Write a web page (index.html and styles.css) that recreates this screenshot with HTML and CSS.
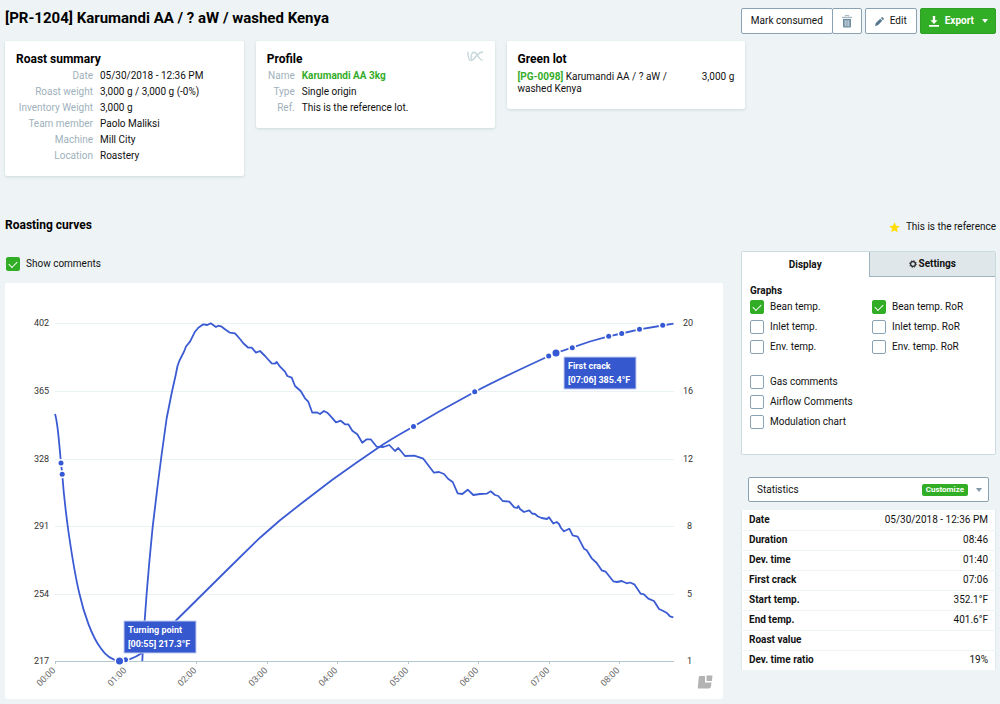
FILE: index.html
```html
<!DOCTYPE html>
<html lang="en">
<head>
<meta charset="utf-8">
<title>Karumandi AA – Roast</title>
<link rel="stylesheet" href="styles.css">
</head>
<body>
<header class="topbar">
  <h1>[PR-1204] Karumandi AA / ? aW / washed Kenya</h1>
  <div class="actions">
    <div class="btn-group">
      <button class="btn" type="button">Mark consumed</button>
      <button class="btn btn-icon" type="button" aria-label="Delete">
        <svg width="10" height="13" viewBox="0 0 10 13"><path d="M3.2 1.6V.5h3.6v1.1" fill="none" stroke="#a5b8c4"/><path d="M0 1.8h10v1.4H0z" fill="#a5b8c4"/><path d="M1 4h8v7.6a1 1 0 0 1-1 1H2a1 1 0 0 1-1-1z" fill="#6e8ca0"/><path d="M3.2 5.2v6.2M5 5.2v6.2M6.800 5.200v6.200" stroke="#dfe7ec" stroke-width=".9"/></svg>
      </button>
    </div>
    <button class="btn" type="button"><svg width="9" height="9" viewBox="0 0 10 10"><path d="M0 10l.9-3.200L5.800 1.900l2.300 2.300-4.900 4.900zM6.500 1.200L7.500.3q.4-.4.8 0l1.400 1.400q.4.4 0 .8l-.9 1z" fill="#56788f"/></svg>Edit</button>
    <button class="btn btn-primary" type="button"><svg width="10" height="11" viewBox="0 0 10 11"><path d="M3.800 0h2.400v4.300h2.300L5 8 1.500 4.300h2.300zM0 9h10v1.700H0z" fill="#fff"/></svg>Export<svg class="caret" width="6" height="4" viewBox="0 0 6 4"><path d="M0 0h6L3 4z" fill="#fff"/></svg></button>
  </div>
</header>

<section class="cards">
  <article class="card">
    <h2>Roast summary</h2>
    <dl class="facts facts-wide">
      <dt>Date</dt><dd>05/30/2018 - 12:36 PM</dd>
      <dt>Roast weight</dt><dd>3,000 g / 3,000 g (-0%)</dd>
      <dt>Inventory Weight</dt><dd>3,000 g</dd>
      <dt>Team member</dt><dd>Paolo Maliksi</dd>
      <dt>Machine</dt><dd>Mill City</dd>
      <dt>Location</dt><dd>Roastery</dd>
    </dl>
  </article>
  <article class="card">
    <div class="card-head">
      <h2>Profile</h2>
      <svg width="17" height="11" viewBox="0 0 17 11" fill="none" stroke="#c6d7dc" stroke-width="1.400"><path d="M.8.8C1 6 1.500 9.500 4 9.500 8 9.500 9.500 1 16 1"/><path d="M4.600 8.500C3.200 4 5 1.200 7.200 1.200c3.300 0 4 7.800 8.500 8.200"/></svg>
    </div>
    <dl class="facts">
      <dt>Name</dt><dd><a href="#profile">Karumandi AA 3kg</a></dd>
      <dt>Type</dt><dd>Single origin</dd>
      <dt>Ref.</dt><dd>This is the reference lot.</dd>
    </dl>
  </article>
  <article class="card">
    <h2>Green lot</h2>
    <div class="lot"><p><a href="#lot">[PG-0098]</a> Karumandi AA / ? aW / washed Kenya</p><span>3,000 g</span></div>
  </article>
</section>

<main class="curves">
  <section class="chart-col">
    <h2>Roasting curves</h2>
    <label class="check show-comments"><input type="checkbox" checked>Show comments</label>
    <div class="chart">
      <svg viewBox="5 283 718 416" role="img" aria-label="Bean temperature and rate of rise over time">
        <path class="grid" d="M55 323.500H674M55 391.500H674M55 459.500H674M55 526.500H674M55 594.500H674"/>
        <path class="axis" d="M55 661.500H674M55.500 661v3M126.500 661v3M196.500 661v3M267.500 661v3M337.500 661v3M408.500 661v3M478.500 661v3M549.500 661v3M619.500 661v3"/>
        <g class="ticks">
          <text x="34" y="326">402</text><text x="34" y="394">365</text><text x="34" y="462">328</text><text x="34" y="529">291</text><text x="34" y="597">254</text><text x="34" y="664">217</text>
          <text x="683" y="326">20</text><text x="683" y="394">16</text><text x="683" y="462">12</text><text x="687" y="529">8</text><text x="687" y="597">5</text><text x="687" y="664">1</text>
        </g>
        <g class="times">
          <text transform="translate(56 671) rotate(-45)">00:00</text>
          <text transform="translate(127 671) rotate(-45)">01:00</text>
          <text transform="translate(197 671) rotate(-45)">02:00</text>
          <text transform="translate(268 671) rotate(-45)">03:00</text>
          <text transform="translate(338 671) rotate(-45)">04:00</text>
          <text transform="translate(409 671) rotate(-45)">05:00</text>
          <text transform="translate(479 671) rotate(-45)">06:00</text>
          <text transform="translate(550 671) rotate(-45)">07:00</text>
          <text transform="translate(620 671) rotate(-45)">08:00</text>
        </g>
        <path class="line" d="M142.300 661L142.800 650L144.700 620L146.700 593L149.500 560L152.700 526.700L157.700 485L161.700 454L166.700 418L172 391.500L175.700 375L177.500 366L179.500 360.500L184 351.700L186 346.500L190 341.700L195 331.700L198.300 327.700L203.300 324.300L207.300 325L210.700 323.300L216 327L218.300 325.700L221.700 326.700L225 329.300L230 332.700L235 333.300L240 339L243.300 343.300L248.300 347.700L251.700 347.700L256 352.700L260 351L265 356L271.700 363.300L275 363.700L276.700 362L280 366.700L285 371.700L287.300 376L291.700 377.700L295 386L300.700 391L305 398.300L308.300 401.700L312.300 412.700L316.700 412.300L320 414L324 411L327.300 412.700L331.700 417.300L336 422.300L340.700 420.700L345 424.300L348.300 424.300L352.300 430.700L357.300 434.300L362.300 442.700L366.700 439.300L370.700 439.300L376.700 446.700L383.300 447L389.300 445L395 451L398.300 448L405 456L414.300 455.700L423.300 458.700L434 472.700L439 472L444 474L448.300 479L452.700 482L457.700 493.300L462.300 494L467.700 489.700L473.300 495L480 494L486.700 493.700L490.700 491.300L495 495L498.300 496L502.700 501L509.300 501.700L514.300 507.300L517 508L518.300 506L520 509L524 512L529.300 510.300L532 513.500L535 514L538 516.500L541.700 518L547 519L549 517.300L553.300 523.500L556.700 522L559 524L561 528L564 531.300L569.300 528.700L572.700 535.300L577.700 536.700L584 548.700L586.700 550.300L591.700 558.300L596.700 563L601.700 570.300L605.700 571.700L613.300 581.300L617 582L621.700 581L626.700 583.300L630 582.500L634.300 584.300L640.700 593.700L644 594.300L648.300 598.700L654 601L659 609L663.300 611L667.300 613.300L670 616.300L673.300 617.300"/>
        <path class="line" d="M55 414C58 423 59 443 61 463L62.200 474C64 498 66 514 68.500 532C72 556 75.500 578 79.500 594C84 614 92 637 101 648.500C106 656 112 660 119.500 661C128 661 136 657 142 653C154 643 166 631 176 620.500L196.700 600L228 569L260 537.700L280 520.300L300 504.500L332 480L356 463L380 446.500C391 439 402 433 413.500 426.500L440 411L475 391.700C499 379 524 367.500 549 356L556 353L572 347.700L590 341.500L608.500 336.300L621.500 333.500L639.500 329.300L662.500 325.500L673.500 323.700"/>
        <g class="dots">
          <circle cx="61" cy="463" r="2.500"/><circle cx="62.200" cy="474.200" r="2.500"/><circle cx="125.500" cy="659.700" r="2.500"/><circle cx="119.500" cy="661" r="3.500"/>
          <circle cx="413.500" cy="426.500" r="2.500"/><circle cx="474.700" cy="391.800" r="2.500"/><circle cx="548.700" cy="356" r="2.500"/><circle cx="556" cy="353" r="3.500"/><circle cx="572.300" cy="347.700" r="2.500"/><circle cx="608.700" cy="336.300" r="2.500"/><circle cx="621.700" cy="333.600" r="2.500"/><circle cx="639.500" cy="329.200" r="2.500"/><circle cx="662.700" cy="325.300" r="2.500"/>
        </g>
        <g class="callout">
          <rect x="124" y="621" width="72" height="32"/><text x="128" y="633">Turning point</text><text x="128" y="647">[00:55] 217.3°F</text>
          <rect x="564" y="357" width="72" height="32"/><text x="568" y="369">First crack</text><text x="568" y="383">[07:06] 385.4°F</text>
        </g>
        <path d="M699.500 676h5.500v6.500h6.500l-.5 4q-.3 2-2.300 2h-11l1-10.500q.2-2 .8-2zM706.500 675.500h6l-.6 5.500h-5.400z" fill="#b3b3b3"/>
      </svg>
    </div>
  </section>

  <aside class="side">
    <p class="reference"><svg width="11" height="11" viewBox="0 0 12 12"><path d="M6 .3l1.700 3.800 4.100.4-3.100 2.700.9 4.100L6 9.200l-3.600 2.100.9-4.100L.2 4.500l4.100-.4z" fill="#ffdc0a"/></svg>This is the reference</p>
    <section class="panel">
      <div class="tabs">
        <button class="tab tab-active" type="button">Display</button>
        <button class="tab" type="button"><svg width="8" height="8" viewBox="0 0 8 8" fill="none" stroke="#222"><circle cx="4" cy="4" r="2.400" stroke-width="1.200"/><circle cx="4" cy="4" r="3.300" stroke-width="1" stroke-dasharray="1.300 1.292"/></svg>Settings</button>
      </div>
      <div class="options">
        <h3>Graphs</h3>
        <div class="graph-grid">
          <label class="check"><input type="checkbox" checked>Bean temp.</label>
          <label class="check"><input type="checkbox" checked>Bean temp. RoR</label>
          <label class="check"><input type="checkbox">Inlet temp.</label>
          <label class="check"><input type="checkbox">Inlet temp. RoR</label>
          <label class="check"><input type="checkbox">Env. temp.</label>
          <label class="check"><input type="checkbox">Env. temp. RoR</label>
        </div>
        <div class="extra">
          <label class="check"><input type="checkbox">Gas comments</label>
          <label class="check"><input type="checkbox">Airflow Comments</label>
          <label class="check"><input type="checkbox">Modulation chart</label>
        </div>
      </div>
    </section>
    <div class="picker">
      <select aria-label="Side panel content"><option>Statistics</option></select>
      <div class="picker-tools"><button class="badge" type="button">Customize</button><svg width="6" height="4" viewBox="0 0 6 4"><path d="M0 0h6L3 4z" fill="#7f98a8"/></svg></div>
    </div>
    <table class="stats">
      <tr><th scope="row">Date</th><td>05/30/2018 - 12:36 PM</td></tr>
      <tr><th scope="row">Duration</th><td>08:46</td></tr>
      <tr><th scope="row">Dev. time</th><td>01:40</td></tr>
      <tr><th scope="row">First crack</th><td>07:06</td></tr>
      <tr><th scope="row">Start temp.</th><td>352.1°F</td></tr>
      <tr><th scope="row">End temp.</th><td>401.6°F</td></tr>
      <tr><th scope="row">Roast value</th><td></td></tr>
      <tr><th scope="row">Dev. time ratio</th><td>19%</td></tr>
    </table>
  </aside>
</main>
</body>
</html>
```
FILE: styles.css
```css
* { box-sizing: border-box; }
body {
  margin: 0;
  padding: 0 4px 5px 5px;
  background: #eef4f5;
  color: #111;
  font: 10px/16px Roboto, "Liberation Sans", sans-serif;
}
h1, h2, h3, p, dl, dd { margin: 0; }
h1 { font-size: 15px; line-height: 20px; font-weight: 700; color: #000; }
h2 { font-size: 12px; line-height: 16px; font-weight: 700; color: #000; }
h3 { font-size: 10px; line-height: 14px; font-weight: 700; }
a { color: #35ad2a; font-weight: 700; text-decoration: none; }
button, select { font: inherit; color: inherit; }
svg { display: block; }

.topbar { display: flex; justify-content: space-between; align-items: flex-start; padding-top: 8px; height: 41px; }
.actions { display: flex; gap: 3px; }
.btn-group { display: flex; }
.btn {
  display: flex; align-items: center; gap: 6px;
  height: 26px; padding: 0 9px;
  background: #fff; border: 1px solid #8aa3b4; border-radius: 2px;
}
.btn-group .btn + .btn { margin-left: -1px; }
.btn-icon { padding: 0 9px; }
.btn-primary { padding: 0 7px 0 8px; background: #32ad26; border-color: #2f9f25; color: #fff; font-weight: 700; }
.caret { margin-left: 2px; }

.cards { display: grid; grid-template-columns: repeat(4, 1fr); gap: 12px; align-items: start; }
.card { background: #fff; border-radius: 2px; padding: 10px 11px 12px; box-shadow: 0 1px 3px rgba(80, 110, 120, .2); }
.card-head { display: flex; justify-content: space-between; }
.facts { display: grid; grid-template-columns: 28px 1fr; column-gap: 7px; margin-top: 1px; }
.facts-wide { grid-template-columns: 77px 1fr; }
.facts dt { text-align: right; color: #a0b1bc; white-space: nowrap; }
.lot { display: flex; justify-content: space-between; line-height: 12px; padding: 4px 0 2px; }
.lot p { width: 160px; }

.curves { display: grid; grid-template-columns: minmax(0, 1fr) 255px; gap: 18px; padding-top: 41px; }
.check { display: flex; align-items: center; gap: 6px; }
.check input {
  appearance: none; margin: 0; width: 14px; height: 14px;
  display: grid; place-items: center;
  background: #fff; border: 1px solid #8aa3b4; border-radius: 2px;
}
.check input:checked { background: #32ad26; border-color: #32ad26; }
.check input:checked::after {
  content: ""; width: 7px; height: 4px; margin-bottom: 2px;
  border: solid #fff; border-width: 0 0 1px 1px; transform: rotate(-45deg);
}
.show-comments { padding: 0 1px; margin: 23px 0 11px; }
.chart { background: #fff; border-radius: 2px; }
.chart svg { width: 100%; height: auto; }
.grid { stroke: #eaf1f3; fill: none; }
.axis { stroke: #b4c7cf; fill: none; }
.ticks { font-size: 9px; fill: #333; }
.times { font-size: 9px; fill: #666; text-anchor: end; }
.line { fill: none; stroke: #3b5bd3; stroke-width: 1.8; stroke-linejoin: round; }
.dots { fill: #3558d4; stroke: #fff; stroke-width: 3; paint-order: stroke; }
.callout { font-size: 9px; font-weight: 700; }
.callout rect { fill: #3558cf; stroke: #c3cdf1; stroke-width: 1; }
.callout text { fill: #fff; }

.reference { display: flex; justify-content: flex-end; align-items: center; gap: 6px; padding-top: 2px; margin-bottom: 16px; }
.panel { background: #fff; border: 1px solid #cbdadf; border-radius: 2px; padding-bottom: 24px; }
.tabs { display: grid; grid-template-columns: 1fr 1fr; }
.tab { display: flex; align-items: center; justify-content: center; gap: 2px; height: 25px; padding: 0; border: 0; background: #fff; font-weight: 700; }
.tab:not(.tab-active) { background: #e0e7ea; border-left: 1px solid #9fb4c1; border-bottom: 1px solid #9fb4c1; }
.options { padding: 7px 8px 0; }
.graph-grid { display: grid; grid-template-columns: 122px 1fr; row-gap: 4px; padding-top: 1px; }
.extra { display: grid; row-gap: 4px; padding-top: 19px; }
.picker { position: relative; margin: 22px 7px 8px; }
.picker select { appearance: none; display: block; width: 100%; height: 25px; padding: 0 8px; background: #fff; border: 1px solid #8aa3b4; border-radius: 2px; }
.picker-tools { position: absolute; top: 0; right: 7px; bottom: 0; display: flex; align-items: center; gap: 8px; }
.badge { height: 12px; padding: 0 4px; border: 0; border-radius: 2px; background: #32ad26; color: #fff; font-size: 8px; line-height: 12px; font-weight: 700; }
.stats { width: 100%; border-collapse: collapse; background: #fff; border: solid #e0e9ec; border-width: 0 1px; }
.stats th, .stats td { height: 20px; padding: 0 7px; line-height: 16px; border-bottom: 1px solid #eff4f5; }
.stats th { text-align: left; font-weight: 700; }
.stats td { text-align: right; }
```
